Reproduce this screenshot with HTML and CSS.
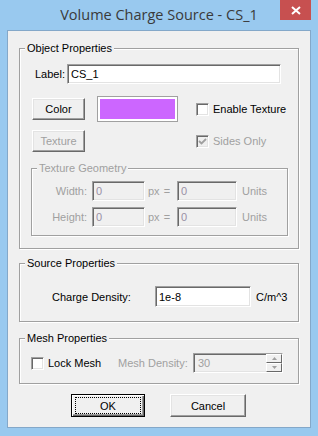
FILE: index.html
```html
<!DOCTYPE html>
<html lang="en">
<head>
    <meta charset="UTF-8">
    <title>Volume Charge Source - CS_1</title>
    <link rel="stylesheet" href="styles.css">
</head>
<body>

    <div class="window">

        <div class="titlebar">
            <span class="title">Volume Charge Source - CS_1</span>
            <button class="close">
                <svg width="10" height="9" viewBox="0 0 10 9">
                    <path d="M1 1 L9 8 M9 1 L1 8" stroke="#fff" stroke-width="2" fill="none"/>
                </svg>
            </button>
        </div>

        <div class="client">

            <fieldset class="group obj">
                <legend>Object Properties</legend>
                <div class="body">
                    <div class="row label-row">
                        <span class="label-text">Label:</span>
                        <input class="field name" type="text" value="CS_1">
                    </div>

                    <div class="row color-row">
                        <button class="btn">Color</button>
                        <span class="swatch"><span></span></span>
                        <label class="check enable">
                            <span class="box"></span>
                            Enable Texture
                        </label>
                    </div>

                    <div class="row texture-row">
                        <button class="btn disabled">Texture</button>
                        <label class="check sides disabled">
                            <span class="box checked">
                                <svg width="11" height="11" viewBox="0 0 11 11">
                                    <path d="M2 5 L4.5 7.5 L9 3" stroke="#a0a0a0" stroke-width="1.8" fill="none"/>
                                </svg>
                            </span>
                            Sides Only
                        </label>
                    </div>

                    <fieldset class="group geometry disabled">
                        <legend>Texture Geometry</legend>
                        <div class="body">
                            <div class="geo-row">
                                <span class="geo-label">Width:</span>
                                <input class="field px-field" type="text" value="0" disabled>
                                <span class="px">px</span>
                                <span class="eq">=</span>
                                <input class="field unit-field" type="text" value="0" disabled>
                                <span class="units">Units</span>
                            </div>
                            <div class="geo-row">
                                <span class="geo-label">Height:</span>
                                <input class="field px-field" type="text" value="0" disabled>
                                <span class="px">px</span>
                                <span class="eq">=</span>
                                <input class="field unit-field" type="text" value="0" disabled>
                                <span class="units">Units</span>
                            </div>
                        </div>
                    </fieldset>
                </div>
            </fieldset>

            <fieldset class="group source">
                <legend>Source Properties</legend>
                <div class="body">
                    <div class="row">
                        <span class="density-label">Charge Density:</span>
                        <input class="field density" type="text" value="1e-8">
                        <span class="unit">C/m^3</span>
                    </div>
                </div>
            </fieldset>

            <fieldset class="group mesh">
                <legend>Mesh Properties</legend>
                <div class="body">
                    <div class="row">
                        <label class="check lock">
                            <span class="box"></span>
                            Lock Mesh
                        </label>
                        <span class="mesh-label">Mesh Density:</span>
                        <div class="spin">
                            <span class="spin-text">30</span>
                            <span class="spin-btns">
                                <span class="spin-btn">
                                    <svg width="5" height="3" viewBox="0 0 5 3"><path d="M2.5 0 L5 3 L0 3 Z" fill="#a0a0a0"/></svg>
                                </span>
                                <span class="spin-btn">
                                    <svg width="5" height="3" viewBox="0 0 5 3"><path d="M0 0 L5 0 L2.5 3 Z" fill="#a0a0a0"/></svg>
                                </span>
                            </span>
                        </div>
                    </div>
                </div>
            </fieldset>

            <div class="actions">
                <button class="btn default"><span class="focus">OK</span></button>
                <button class="btn cancel">Cancel</button>
            </div>

        </div>
    </div>

</body>
</html>
```

FILE: styles.css
```css
body{
    margin: 0;
    font-family: "Liberation Sans", Arial, sans-serif;
    font-size: 11px;
    color: #000;
}
.window{
    width: 318px;
    height: 436px;
    background: #99c9ef;
    overflow: hidden;
}
.titlebar{
    display: flex;
    height: 30px;
}
.title{
    flex: 1;
    padding-left: 38px;
    text-align: center;
    font-family: "Open Sans", "Liberation Sans", sans-serif;
    font-size: 14.5px;
    line-height: 30px;
    color: #3a3a3a;
}
.close{
    width: 31px;
    height: 20px;
    margin-right: 7px;
    padding: 0;
    border: 0;
    background: #c75050;
    display: flex;
    align-items: center;
    justify-content: center;
}
.client{
    height: 396px;
    margin: 0 7px 8px;
    border: 1px solid #84a8c9;
    background: #f0f0f0;
    overflow: hidden;
}

/* group boxes */
.group{
    margin: 0 11px;
    padding: 0;
    min-width: 0;
    border: 1px solid #a0a0a0;
    box-shadow: inset 1px 1px #fff, 1px 1px #fff;
}
.group legend{
    margin-left: 5px;
    padding: 0 2px;
    line-height: 13px;
    background: #f0f0f0;
}
.row{
    display: flex;
    align-items: center;
}

.obj{
    margin-top: 11px;
}
.obj>.body{
    padding: 9px 0 12px 12px;
}
.label-row{
    height: 20px;
    padding-left: 3px;
}
.label-text{
    width: 32px;
}
.field{
    box-sizing: border-box;
    height: 20px;
    margin: 0;
    padding: 0 3px;
    border: 1px solid;
    border-color: #a0a0a0 #fff #fff #a0a0a0;
    box-shadow: inset 1px 1px #696969, inset -1px -1px #e3e3e3;
    background: #fff;
    font: inherit;
    color: #000;
    outline: none;
}
.name{
    width: 214px;
}
.color-row{
    height: 26px;
    margin-top: 12px;
}
.texture-row{
    height: 22px;
    margin-top: 8px;
}
.btn{
    box-sizing: border-box;
    width: 53px;
    height: 22px;
    margin: 0;
    padding: 0;
    border: 1px solid;
    border-color: #fff #696969 #696969 #fff;
    box-shadow: inset -1px -1px #a0a0a0, inset 1px 1px #e3e3e3;
    background: #f0f0f0;
    font: inherit;
    color: #000;
}
.btn.disabled{
    color: #a0a0a0;
}
.swatch{
    box-sizing: border-box;
    width: 81px;
    height: 26px;
    margin-left: 12px;
    padding: 2px;
    border: 1px solid #a0a0a0;
    background: #fff;
    display: flex;
}
.swatch span{
    flex: 1;
    background: #cc66ff;
}
.check{
    display: flex;
    align-items: center;
    gap: 4px;
}
.box{
    box-sizing: border-box;
    width: 13px;
    height: 13px;
    border: 1px solid;
    border-color: #a0a0a0 #fff #fff #a0a0a0;
    box-shadow: inset 1px 1px #696969, inset -1px -1px #e3e3e3;
    background: #fff;
    display: flex;
    align-items: center;
    justify-content: center;
}
.enable{
    margin-left: 18px;
}
.sides{
    margin-left: 111px;
}
.disabled,
.disabled legend{
    color: #a0a0a0;
}
.box.checked{
    background: #f0f0f0;
}

/* texture geometry */
.geometry{
    width: 257px;
    box-sizing: border-box;
    margin: 10px 0 0 -1px;
}
.geometry>.body{
    padding: 6px 0 8px 0;
}
.geo-row{
    display: flex;
    align-items: center;
    height: 20px;
}
.geo-row + .geo-row{
    margin-top: 6px;
}
.geo-label{
    width: 55px;
    text-align: right;
}
.field[disabled]{
    background: #f0f0f0;
    color: #9a8fa6;
}
.px-field{
    width: 53px;
    margin-left: 5px;
}
.px{
    margin-left: 3px;
}
.eq{
    margin-left: 4px;
}
.unit-field{
    width: 60px;
    margin-left: 7px;
}
.units{
    margin-left: 5px;
}

/* source */
.source{
    margin-top: 8px;
}
.source>.body{
    padding: 16px 0 14px 32px;
}
.density-label{
    width: 103px;
}
.density{
    width: 96px;
    height: 21px;
}
.unit{
    margin-left: 5px;
}

/* mesh */
.mesh{
    margin-top: 10px;
}
.mesh>.body{
    padding: 8px 0 10px 11px;
}
.lock{
    width: 87px;
}
.mesh-label{
    width: 75px;
    color: #a0a0a0;
}
.spin{
    box-sizing: border-box;
    width: 90px;
    height: 20px;
    border: 1px solid;
    border-color: #a0a0a0 #fff #fff #a0a0a0;
    box-shadow: inset 1px 1px #696969, inset -1px -1px #e3e3e3;
    background: #f0f0f0;
    display: flex;
}
.spin-text{
    flex: 1;
    padding-left: 4px;
    line-height: 18px;
    color: #a0a0a0;
}
.spin-btns{
    width: 16px;
    display: flex;
    flex-direction: column;
}
.spin-btn{
    flex: 1;
    box-sizing: border-box;
    border: 1px solid;
    border-color: #fff #696969 #696969 #fff;
    background: #f0f0f0;
    display: flex;
    align-items: center;
    justify-content: center;
}

/* dialog buttons */
.actions{
    display: flex;
    gap: 25px;
    margin-top: 10px;
    padding-left: 63px;
}
.default{
    width: 74px;
    height: 23px;
    border: 1px solid #000;
    box-shadow: inset 1px 1px #fff, inset -1px -1px #696969, inset -2px -2px #a0a0a0;
}
.focus{
    display: flex;
    align-items: center;
    justify-content: center;
    box-sizing: border-box;
    height: 17px;
    margin: 0 3px;
    border: 1px dotted #000;
}
.cancel{
    width: 76px;
    height: 23px;
}
```
